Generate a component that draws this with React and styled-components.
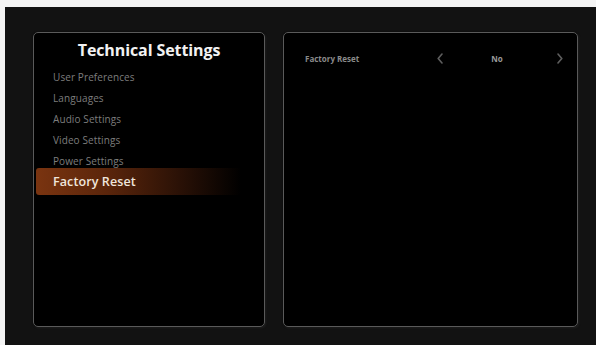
import React from "react";
import styled, { createGlobalStyle } from "styled-components";

const Global = createGlobalStyle`
  html, body { margin: 0; padding: 0; background: #f4f4f4; }
  body { font-family: "Open Sans", "DejaVu Sans", sans-serif; }
`;

const Screen = styled.div`
  margin: 7px 0 0 5px;
  width: 591px;
  height: 338px;
  background: #121212;
  box-sizing: border-box;
  padding: 25px 0 0 28px;
  display: flex;
  gap: 18px;
  align-items: flex-start;
`;

const Panel = styled.div`
  width: ${(p) => p.$w}px;
  height: 295px;
  box-sizing: border-box;
  background: #000;
  border: 1.5px solid #5a5a5a;
  border-radius: 5px;
  box-shadow: 0 0 2px rgba(0,0,0,0.8), 1px 1px 2px rgba(80,80,80,0.3);
`;

const Title = styled.div`
  text-align: center;
  color: #f2f2f2;
  font-weight: 700;
  font-size: 16px;
  letter-spacing: -0.1px;
  margin-top: 5px;
  line-height: 24px;
`;

const Menu = styled.div`
  display: flex;
  flex-direction: column;
  margin-top: 5px;
`;

const Item = styled.div`
  height: ${(p) => (p.$active ? 27 : 20.8)}px;
  margin-top: ${(p) => (p.$active ? -2.5 : 0)}px;
  display: flex;
  align-items: center;
  margin-left: 2px;
  width: 205px;
  padding-left: 17px;
  box-sizing: border-box;
  font-size: ${(p) => (p.$active ? 12.5 : 10)}px;
  font-weight: ${(p) => (p.$active ? 600 : 400)};
  color: ${(p) => (p.$active ? "#f0e6dc" : "#7d7d7d")};
  border-radius: 3px;
  background: ${(p) =>
    p.$active
      ? "linear-gradient(90deg, #7a3410 0%, #5a250b 35%, #2a1106 70%, rgba(0,0,0,0) 100%)"
      : "transparent"};
  letter-spacing: 0.1px;
`;

const Row = styled.div`
  display: grid;
  grid-template-columns: 120px 30px 84px 42px;
  align-items: center;
  margin: 18px 0 0 21px;
  font-size: 8px;
  font-weight: 700;
  color: #8a8a8a;
`;

const Label = styled.div``;

const Arrow = styled.div`
  display: flex;
  justify-content: center;
  align-items: center;
  height: 14px;
`;

const Value = styled.div`
  text-align: center;
  color: #9a9a9a;
`;

const Chevron = ({ dir }) => (
  <svg width="6" height="11" viewBox="0 0 6 11">
    <path
      d={dir === "left" ? "M5 1 L1.2 5.5 L5 10" : "M1 1 L4.8 5.5 L1 10"}
      fill="none"
      stroke="#5e5e5e"
      strokeWidth="1.6"
      strokeLinecap="round"
      strokeLinejoin="round"
    />
  </svg>
);

const items = [
  "User Preferences",
  "Languages",
  "Audio Settings",
  "Video Settings",
  "Power Settings",
];

export default function App() {
  return (
    <>
      <Global />
      <Screen>
        <Panel $w={232}>
          <Title>Technical Settings</Title>
          <Menu>
            {items.map((t) => (
              <Item key={t}>{t}</Item>
            ))}
            <Item $active>Factory Reset</Item>
          </Menu>
        </Panel>
        <Panel $w={295}>
          <Row>
            <Label>Factory Reset</Label>
            <Arrow>
              <Chevron dir="left" />
            </Arrow>
            <Value>No</Value>
            <Arrow>
              <Chevron dir="right" />
            </Arrow>
          </Row>
        </Panel>
      </Screen>
    </>
  );
}
